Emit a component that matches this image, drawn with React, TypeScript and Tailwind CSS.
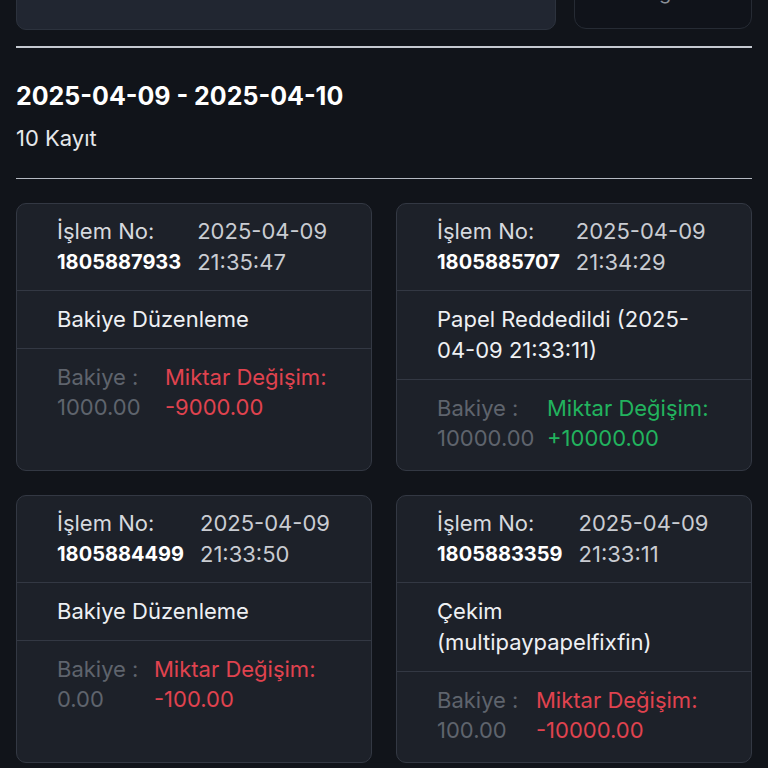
import React from "react";

type Item = {
  no: string;
  date: string;
  title: string;
  bakiye: string;
  change: string;
  positive: boolean;
  leftW: string;
};

const items: Item[] = [
  { no: "1805887933", date: "2025-04-09 21:35:47", title: "Bakiye Düzenleme", bakiye: "1000.00", change: "-9000.00", positive: false, leftW: "w-[108px]" },
  { no: "1805885707", date: "2025-04-09 21:34:29", title: "Papel Reddedildi (2025-04-09 21:33:11)", bakiye: "10000.00", change: "+10000.00", positive: true, leftW: "w-[110px]" },
  { no: "1805884499", date: "2025-04-09 21:33:50", title: "Bakiye Düzenleme", bakiye: "0.00", change: "-100.00", positive: false, leftW: "w-[97px]" },
  { no: "1805883359", date: "2025-04-09 21:33:11", title: "Çekim (multipaypapelfixfin)", bakiye: "100.00", change: "-10000.00", positive: false, leftW: "w-[99px]" },
];

function Card({ it }: { it: Item }) {
  return (
    <div className="flex flex-col rounded-[10px] border border-[#333843] bg-[#1d2129]">
      <div className="flex gap-4 px-10 pt-3 pb-3 text-[22px] leading-[31px]">
        <div className="shrink-0">
          <div className="text-[#d6d9de]">İşlem No:</div>
          <div className="text-[20px] font-bold text-white">{it.no}</div>
        </div>
        <div className="text-[#c9ccd2]">{it.date}</div>
      </div>
      <div className="border-t border-[#333843] px-10 py-[13px] text-[22px] leading-[31px] text-[#eef0f3]">
        {it.title}
      </div>
      <div className="flex flex-1 border-t border-[#333843] px-10 pt-[13px] pb-[17px] text-[22px] leading-[30px]">
        <div className={`${it.leftW} shrink-0 whitespace-nowrap text-[#5f646d]`}>
          <div>Bakiye :</div>
          <div>{it.bakiye}</div>
        </div>
        <div className={`whitespace-nowrap ${it.positive ? "text-[#22b35e]" : "text-[#e0434f]"}`}>
          <div>Miktar Değişim:</div>
          <div>{it.change}</div>
        </div>
      </div>
    </div>
  );
}

export default function App() {
  return (
    <div
      className="min-h-[768px] overflow-hidden bg-[#11141a] px-4"
      style={{ fontFamily: "Inter, 'Noto Sans', sans-serif" }}
    >
      <div className="-mt-[40px] flex gap-[18px]">
        <div className="h-[70px] flex-1 rounded-[10px] border border-[#2c323d] bg-[#212631]"></div>
        <div className="flex h-[69px] w-[178px] items-start justify-center overflow-hidden rounded-[12px] border border-[#262b34] bg-[#10131a] pt-[21px] text-[20px] leading-[20px] text-[#8a8f97]">
          Sorgula
        </div>
      </div>
      <div className="mt-[16px] h-[2px] bg-[#c5c9d0]"></div>
      <div className="pt-[33px] text-[25px] font-bold leading-[30px] text-white">
        2025-04-09 - 2025-04-10
      </div>
      <div className="mt-[13px] text-[22px] leading-[28px] text-[#e6e8eb]">10 Kayıt</div>
      <div className="mt-[26px] h-px bg-[#b5bac2]"></div>
      <div className="mt-6 grid grid-cols-2 gap-6">
        {items.map((it) => (
          <Card key={it.no} it={it} />
        ))}
      </div>
    </div>
  );
}
